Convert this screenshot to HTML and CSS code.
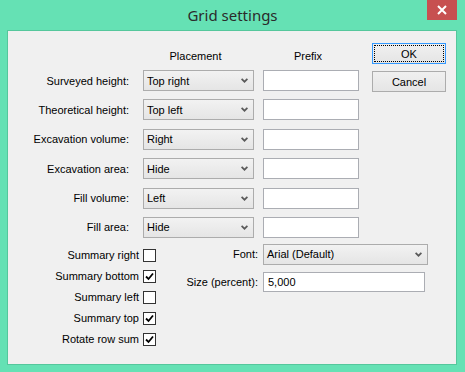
FILE: index.html
```html
<!DOCTYPE html>
<html lang="en">
<head>
    <meta charset="UTF-8">
    <title>Grid settings</title>
    <link rel="stylesheet" href="styles.css">
</head>
<body>
    <div class="window">
        <div class="titlebar">
            <span></span>
            <span class="title">Grid settings</span>
            <button class="close" aria-label="Close">
                <svg width="10" height="10" viewBox="0 0 10 10"><path d="M1 1 L9 9 M9 1 L1 9" stroke="#fff" stroke-width="2"/></svg>
            </button>
        </div>

        <div class="client">
            <div class="top">
                <div class="form">
                    <div class="heads">
                        <span class="head-sel">Placement</span>
                        <span class="head-pre">Prefix</span>
                    </div>
                    <div class="rows">
                        <label>Surveyed height:</label>
                        <div class="combo"><span>Top right</span><svg class="arrow" width="7" height="5" viewBox="0 0 7 5"><path d="M0.6 0.8 L3.5 3.7 L6.4 0.8" fill="none" stroke="#5a5a5a" stroke-width="1.7"/></svg></div>
                        <input class="field" type="text">

                        <label>Theoretical height:</label>
                        <div class="combo"><span>Top left</span><svg class="arrow" width="7" height="5" viewBox="0 0 7 5"><path d="M0.6 0.8 L3.5 3.7 L6.4 0.8" fill="none" stroke="#5a5a5a" stroke-width="1.7"/></svg></div>
                        <input class="field" type="text">

                        <label>Excavation volume:</label>
                        <div class="combo"><span>Right</span><svg class="arrow" width="7" height="5" viewBox="0 0 7 5"><path d="M0.6 0.8 L3.5 3.7 L6.4 0.8" fill="none" stroke="#5a5a5a" stroke-width="1.7"/></svg></div>
                        <input class="field" type="text">

                        <label>Excavation area:</label>
                        <div class="combo"><span>Hide</span><svg class="arrow" width="7" height="5" viewBox="0 0 7 5"><path d="M0.6 0.8 L3.5 3.7 L6.4 0.8" fill="none" stroke="#5a5a5a" stroke-width="1.7"/></svg></div>
                        <input class="field" type="text">

                        <label>Fill volume:</label>
                        <div class="combo"><span>Left</span><svg class="arrow" width="7" height="5" viewBox="0 0 7 5"><path d="M0.6 0.8 L3.5 3.7 L6.4 0.8" fill="none" stroke="#5a5a5a" stroke-width="1.7"/></svg></div>
                        <input class="field" type="text">

                        <label>Fill area:</label>
                        <div class="combo"><span>Hide</span><svg class="arrow" width="7" height="5" viewBox="0 0 7 5"><path d="M0.6 0.8 L3.5 3.7 L6.4 0.8" fill="none" stroke="#5a5a5a" stroke-width="1.7"/></svg></div>
                        <input class="field" type="text">
                    </div>
                </div>
                <div class="buttons">
                    <button class="btn default"><span>OK</span></button>
                    <button class="btn">Cancel</button>
                </div>
            </div>

            <div class="bottom">
                <div class="checks">
                    <div class="check"><span>Summary right</span><i class="box"></i></div>
                    <div class="check"><span>Summary bottom</span><i class="box on"></i></div>
                    <div class="check"><span>Summary left</span><i class="box"></i></div>
                    <div class="check"><span>Summary top</span><i class="box on"></i></div>
                    <div class="check"><span>Rotate row sum</span><i class="box on"></i></div>
                </div>
                <div class="fontset">
                    <label>Font:</label>
                    <div class="combo wide"><span>Arial (Default)</span><svg class="arrow" width="7" height="5" viewBox="0 0 7 5"><path d="M0.6 0.8 L3.5 3.7 L6.4 0.8" fill="none" stroke="#5a5a5a" stroke-width="1.7"/></svg></div>
                    <label>Size (percent):</label>
                    <div class="field size">5,000</div>
                </div>
            </div>
        </div>
    </div>
</body>
</html>
```

FILE: styles.css
```css
body {
    margin: 0;
    font-family: "Liberation Sans", Arial, sans-serif;
    font-size: 11px;
    color: #000;
}

.window {
    width: 465px;
    height: 372px;
    background: #65e1b4;
    display: flex;
    flex-direction: column;
}

.titlebar {
    height: 30px;
    display: grid;
    grid-template-columns: 1fr auto 1fr;
    align-items: start;
}

.title {
    font-family: "Noto Sans", "Open Sans", sans-serif;
    font-size: 15px;
    line-height: 30px;
    color: #2b2b2b;
}

.close {
    justify-self: end;
    margin-right: 8px;
    width: 30px;
    height: 20px;
    border: 0;
    padding: 0;
    background: #c75050;
    display: flex;
    justify-content: center;
    align-items: center;
}

.client {
    margin: 0 8px 7px 7px;
    flex: 1;
    background: #f0f0f0;
    border: 1px solid #55c79c;
}

.top {
    display: flex;
}

.heads {
    display: flex;
    margin: 18px 0 7px 135px;
    line-height: 14px;
}

.heads span {
    box-sizing: border-box;
    text-align: center;
    padding-right: 6px;
}

.head-sel {
    width: 111px;
}

.head-pre {
    width: 96px;
    margin-left: 9px;
}

.rows {
    display: grid;
    grid-template-columns: 135px 120px 96px;
    grid-auto-rows: 21px;
    row-gap: 8.4px;
}

.rows label {
    text-align: right;
    align-self: center;
    padding-right: 14px;
}

.combo {
    box-sizing: border-box;
    width: 111px;
    border: 1px solid #acacac;
    background: linear-gradient(#f2f2f2, #e5e5e5);
    display: flex;
    align-items: center;
    justify-content: space-between;
    padding: 0 5px 0 3px;
    height: 21px;
}

.combo.wide {
    width: 165px;
}

.field {
    box-sizing: border-box;
    width: 96px;
    height: 21px;
    border: 1px solid #abadb3;
    background: #fff;
    margin: 0;
    padding: 0 4px;
    font: inherit;
}

.buttons {
    display: flex;
    flex-direction: column;
    gap: 7px;
    margin: 12px 0 0 13px;
}

.btn {
    width: 74px;
    height: 21px;
    border: 1px solid #acacac;
    background: linear-gradient(#f0f0f0, #e5e5e5);
    font: inherit;
    color: #000;
    padding: 0;
}

.btn.default {
    border-color: #3399ff;
    padding: 1px;
}

.btn.default span {
    display: flex;
    height: 100%;
    box-sizing: border-box;
    justify-content: center;
    align-items: center;
    outline: 1px dotted #000;
    outline-offset: -1px;
}

.bottom {
    display: flex;
    margin-top: 6px;
}

.checks {
    width: 148px;
    padding-top: 5px;
    display: flex;
    flex-direction: column;
    gap: 8px;
}

.check {
    display: flex;
    justify-content: flex-end;
    align-items: center;
    gap: 4px;
    height: 13px;
}

.box {
    width: 13px;
    height: 13px;
    box-sizing: border-box;
    border: 1px solid #333;
    background: #fff;
}

.box.on {
    background: #fff url("data:image/svg+xml,%3Csvg xmlns='http://www.w3.org/2000/svg' width='11' height='11'%3E%3Cpath d='M2 5.5 L4.5 8 L9 2.5' fill='none' stroke='%23000' stroke-width='1.8'/%3E%3C/svg%3E") center no-repeat;
}

.fontset {
    margin-left: 4px;
    display: grid;
    grid-template-columns: 98px 165px;
    grid-template-rows: 21px 20px;
    column-gap: 5px;
    row-gap: 7px;
}

.fontset label {
    text-align: right;
    align-self: center;
}

.size {
    width: 162px;
    height: 20px;
    display: flex;
    align-items: center;
}
```
